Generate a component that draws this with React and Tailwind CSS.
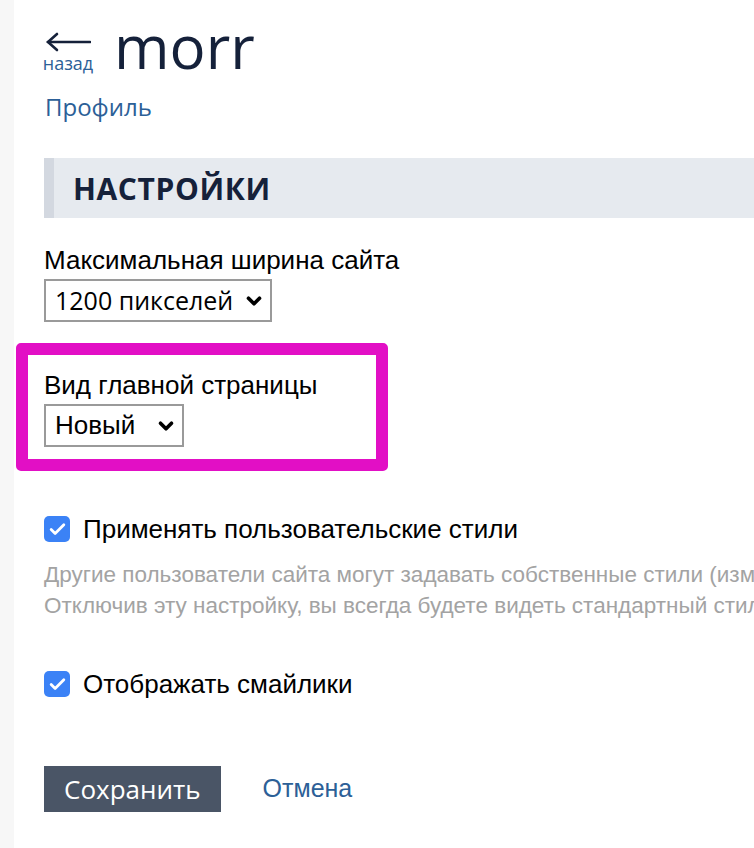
import { Check, ChevronDown } from 'lucide-react'

const OPEN = { fontFamily: '"Open Sans", sans-serif' }
const HELV = { fontFamily: '"Liberation Sans", Arial, sans-serif' }

function FakeSelect({ value, className = '', textClass = '', font = OPEN }) {
  return (
    <div className={`inline-flex items-center h-[43px] border-2 border-[#9a9a9a] bg-white pl-[9px] pr-[5px] ${className}`}>
      <span className={`text-black ${textClass}`} style={font}>{value}</span>
      <ChevronDown size={22} strokeWidth={4} className="text-black" />
    </div>
  )
}

function CheckRow({ label }) {
  return (
    <label className="flex items-center gap-[13px] h-[30px]">
      <span className="flex items-center justify-center w-[26px] h-[26px] rounded-[5px] bg-[#3b82f6]">
        <Check size={19} strokeWidth={3.5} className="text-white" />
      </span>
      <span className="text-[26px] leading-[30px] text-black" style={HELV}>{label}</span>
    </label>
  )
}

export default function App() {
  return (
    <div className="flex min-h-screen bg-white overflow-hidden">
      <div className="w-[14px] shrink-0 bg-[#f7f7f7]" />

      <main className="flex-1 min-w-0 pl-[30px]">
        {/* header */}
        <div className="flex items-start pt-[16px]">
          <a href="#" className="flex flex-col items-center w-[52px] -ml-[2px] pt-[16px]">
            <svg width="46" height="20" viewBox="0 0 46 20" fill="none" stroke="#15213a" strokeWidth="2.6" strokeLinecap="round">
              <line x1="3" y1="10" x2="45" y2="10" />
              <polyline points="12,2 3,10 12,18" />
            </svg>
            <span className="text-[18px] leading-[22px] text-[#2c6097]" style={OPEN}>назад</span>
          </a>
          <h1 className="ml-[20px] text-[60px] leading-[60px] text-[#15213a]" style={OPEN}>morr</h1>
        </div>

        <a href="#" className="block mt-[15px] ml-[1px] text-[24px] leading-[32px] text-[#2c6097]" style={OPEN}>Профиль</a>

        <div className="mt-[35px] h-[60px] flex items-center bg-[#e6eaef] border-l-[10px] border-[#d3d8e0] pl-[19px]">
          <h2 className="text-[30px] font-bold tracking-[0.02em] text-[#15213a]" style={OPEN}>НАСТРОЙКИ</h2>
        </div>

        <div className="mt-[29px] text-[26px] leading-[26px] text-black" style={HELV}>Максимальная ширина сайта</div>
        <FakeSelect value="1200 пикселей" className="mt-[6px] gap-[10px]" textClass="text-[25px]" />

        {/* highlighted block */}
        <div className="mt-[21px] -ml-[28px] w-[372px] border-[12px] border-[#e20fc5] rounded-[5px] pl-[16px] pt-[17px] pb-[12px]">
          <div className="text-[26px] leading-[26px] text-black" style={HELV}>Вид главной страницы</div>
          <FakeSelect value="Новый" className="mt-[6px] gap-[20px]" textClass="text-[26px]" font={HELV} />
        </div>

        <div className="mt-[43px]">
          <CheckRow label="Применять пользовательские стили" />
        </div>
        <div className="mt-[15px] text-[22.5px] leading-[31px] text-[#a3a3a3] whitespace-nowrap" style={HELV}>
          <p>Другие пользователи сайта могут задавать собственные стили (изменять внешний вид своих страниц).</p>
          <p>Отключив эту настройку, вы всегда будете видеть стандартный стиль сайта.</p>
        </div>

        <div className="mt-[48px]">
          <CheckRow label="Отображать смайлики" />
        </div>

        <div className="mt-[67px] flex items-center gap-[42px]">
          <button className="h-[46px] px-[20px] bg-[#4a5566] text-white text-[26px]" style={OPEN}>Сохранить</button>
          <a href="#" className="text-[25px] text-[#2c6097]" style={HELV}>Отмена</a>
        </div>
      </main>
    </div>
  )
}
